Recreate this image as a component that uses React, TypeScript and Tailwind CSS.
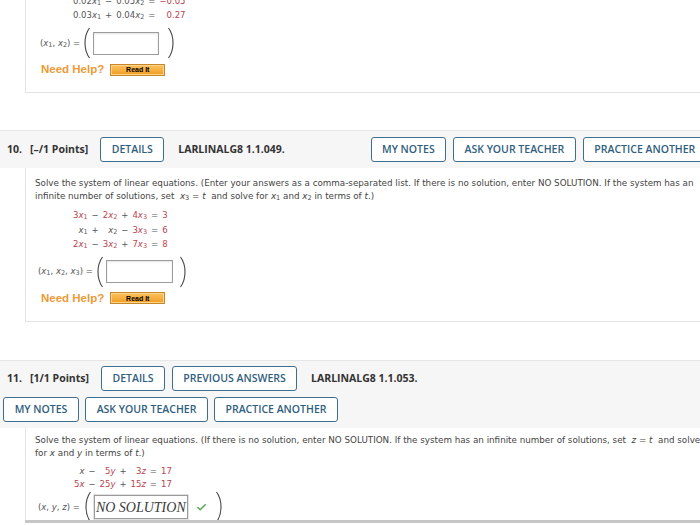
import React from 'react';
import { Check } from 'lucide-react';

const RED = 'text-[#b8434f]';
const GRAY = 'text-[#555]';

// variable with optional subscript, e.g. x₁
const V = ({ n, s }: { n: string; s?: string }) => (
  <span>
    <i>{n}</i>
    {s && <sub className="text-[6.5px] relative top-[1px]">{s}</sub>}
  </span>
);

const Paren = ({ close }: { close?: boolean }) => (
  <svg width="9" height="32" viewBox="0 0 9 32" className="shrink-0">
    <path
      d={close ? 'M1.5 1 C7.5 9 7.5 23 1.5 31' : 'M7.5 1 C1.5 9 1.5 23 7.5 31'}
      fill="none"
      stroke="#444"
      strokeWidth="1.1"
    />
  </svg>
);

const Btn = ({ label, w }: { label: string; w: string }) => (
  <div
    className={`${w} h-[25px] shrink-0 flex items-center justify-center rounded-[3px] border-[1.5px] border-[#3f6f8e] bg-white text-[10.5px] font-semibold text-[#2f5e7e]`}
  >
    {label}
  </div>
);

const NeedHelp = () => (
  <div className="flex items-center font-['Liberation_Sans',Arial,sans-serif]">
    <span className="text-[11.5px] font-bold text-[#ec9a37]">Need Help?</span>
    <div className="ml-[6px] w-[55px] h-[12px] flex items-center justify-center bg-linear-to-b from-[#fcc35e] to-[#f09c1c] border border-[#c7862a] shadow-[inset_0_0_0_1px_#fbd48a] text-[7px] font-bold text-black leading-none">
      Read It
    </div>
  </div>
);

type Cell = { t: React.ReactNode; c?: string };

const Equations = ({ rows, cols, rowH }: { rows: Cell[][]; cols: number; rowH: string }) => (
  <div
    className={`grid gap-x-[4px] justify-items-end ${rowH}`}
    style={{ gridTemplateColumns: `repeat(${cols}, auto)`, width: 'max-content' }}
  >
    {rows.flatMap((r, i) =>
      r.map((cell, j) => (
        <span key={`${i}-${j}`} className={cell.c ?? GRAY}>
          {cell.t}
        </span>
      ))
    )}
  </div>
);

const Box = ({ w }: { w: string }) => (
  <div className={`${w} h-[23px] mx-[2px] border border-[#9c9c9c] bg-white shadow-[inset_0_1px_2px_rgba(0,0,0,0.12)]`} />
);

export default function App() {
  const op = (s: string): Cell => ({ t: s, c: 'text-[#555]' });

  const q9: Cell[][] = [
    [{ t: <>0.02<V n="x" s="1" /></> }, op('−'), { t: <>0.05<V n="x" s="2" /></> }, op('='), { t: '−0.05', c: RED }],
    [{ t: <>0.03<V n="x" s="1" /></> }, op('+'), { t: <>0.04<V n="x" s="2" /></> }, op('='), { t: '0.27', c: RED }],
  ];

  const q10: Cell[][] = [
    [{ t: <>3<V n="x" s="1" /></>, c: RED }, op('−'), { t: <>2<V n="x" s="2" /></>, c: RED }, op('+'), { t: <>4<V n="x" s="3" /></>, c: RED }, op('='), { t: '3', c: RED }],
    [{ t: <V n="x" s="1" /> }, op('+'), { t: <V n="x" s="2" /> }, op('−'), { t: <>3<V n="x" s="3" /></>, c: RED }, op('='), { t: '6', c: RED }],
    [{ t: <>2<V n="x" s="1" /></>, c: RED }, op('−'), { t: <>3<V n="x" s="2" /></>, c: RED }, op('+'), { t: <>7<V n="x" s="3" /></>, c: RED }, op('='), { t: '8', c: RED }],
  ];

  const q11: Cell[][] = [
    [{ t: <V n="x" /> }, op('−'), { t: <>5<V n="y" /></>, c: RED }, op('+'), { t: <>3<V n="z" /></>, c: RED }, op('='), { t: '17', c: RED }],
    [{ t: <>5<V n="x" /></>, c: RED }, op('−'), { t: <>25<V n="y" /></>, c: RED }, op('+'), { t: <>15<V n="z" /></>, c: RED }, op('='), { t: '17', c: RED }],
  ];

  return (
    <div className="w-[700px] h-[525px] overflow-hidden bg-white font-['DejaVu_Sans',Verdana,sans-serif] text-[#333]">
      {/* tail of question 9 */}
      <div className="ml-[25px] h-[93px] border-l border-b border-[#e3e3e3] overflow-hidden text-[8.5px]">
        <div className="-mt-[6px] ml-[47px]">
          <Equations rows={q9} cols={5} rowH="leading-[14px]" />
        </div>
        <div className="flex items-center ml-[14px] mt-[5px]">
          <span className={GRAY}>
            (<V n="x" s="1" />, <V n="x" s="2" />) =
          </span>
          <div className="ml-[2px] flex items-center">
            <Paren />
            <Box w="w-[66px]" />
            <div className="w-[6px]" />
            <Paren close />
          </div>
        </div>
        <div className="ml-[15px] mt-[2px]">
          <NeedHelp />
        </div>
      </div>

      {/* question 10 */}
      <div className="mt-[37px] h-[38px] border-t border-[#e6e6e6] bg-[#f6f6f6] flex items-center whitespace-nowrap font-['Open_Sans',sans-serif] text-[#333]">
        <span className="ml-[7px] text-[10.5px] font-bold">10.</span>
        <span className="ml-[8px] text-[10.5px] font-bold">[–/1 Points]</span>
        <div className="ml-[12px]">
          <Btn label="DETAILS" w="w-[64px]" />
        </div>
        <span className="ml-[14px] text-[10.5px] font-bold">LARLINALG8 1.1.049.</span>
        <div className="ml-[86px] flex gap-[7px]">
          <Btn label="MY NOTES" w="w-[75px]" />
          <Btn label="ASK YOUR TEACHER" w="w-[123px]" />
          <Btn label="PRACTICE ANOTHER" w="w-[124px]" />
        </div>
      </div>
      <div className="ml-[25px] h-[154px] border-l border-b border-[#e3e3e3] overflow-hidden text-[8.75px] text-[#444] whitespace-nowrap">
        <p className="pt-[9px] pl-[9px] leading-[13px]">
          Solve the system of linear equations. (Enter your answers as a comma-separated list. If there is no solution, enter NO SOLUTION. If the system has an
          <br />
          infinite number of solutions, set&nbsp; <V n="x" s="3" /> = <i>t</i>&nbsp; and solve for <V n="x" s="1" /> and <V n="x" s="2" /> in terms of <i>t</i>.)
        </p>
        <div className="ml-[47px] mt-[5px] text-[8.5px]">
          <Equations rows={q10} cols={7} rowH="leading-[14.5px]" />
        </div>
        <div className="flex items-center ml-[12px] mt-[4px] text-[8.5px]">
          <span className={GRAY}>
            (<V n="x" s="1" />, <V n="x" s="2" />, <V n="x" s="3" />) =
          </span>
          <div className="ml-[2px] flex items-center">
            <Paren />
            <Box w="w-[67px]" />
            <div className="w-[4px]" />
            <Paren close />
          </div>
        </div>
        <div className="ml-[15px] mt-[2px]">
          <NeedHelp />
        </div>
      </div>

      {/* question 11 */}
      <div className="mt-[38px] h-[68px] border-t border-[#e6e6e6] bg-[#f6f6f6] pt-[5px] whitespace-nowrap font-['Open_Sans',sans-serif] text-[#333]">
        <div className="flex items-center h-[25px]">
          <span className="ml-[7px] text-[10.5px] font-bold">11.</span>
          <span className="ml-[8px] text-[10.5px] font-bold">[1/1 Points]</span>
          <div className="ml-[12px] flex gap-[7px]">
            <Btn label="DETAILS" w="w-[64px]" />
            <Btn label="PREVIOUS ANSWERS" w="w-[125px]" />
          </div>
          <span className="ml-[14px] text-[10.5px] font-bold">LARLINALG8 1.1.053.</span>
        </div>
        <div className="flex items-center h-[25px] mt-[6px] ml-[3px] gap-[6px]">
          <Btn label="MY NOTES" w="w-[76px]" />
          <Btn label="ASK YOUR TEACHER" w="w-[123px]" />
          <Btn label="PRACTICE ANOTHER" w="w-[124px]" />
        </div>
      </div>
      <div className="ml-[25px] h-[92px] border-l border-[#e3e3e3] overflow-hidden text-[8.75px] text-[#444] whitespace-nowrap">
        <p className="pt-[6px] pl-[9px] leading-[13px]">
          Solve the system of linear equations. (If there is no solution, enter NO SOLUTION. If the system has an infinite number of solutions, set&nbsp; <i>z</i> = <i>t</i>&nbsp; and solve
          <br />
          for <i>x</i> and <i>y</i> in terms of <i>t</i>.)
        </p>
        <div className="ml-[48px] mt-[5px] text-[8.5px]">
          <Equations rows={q11} cols={7} rowH="leading-[13px]" />
        </div>
        <div className="flex items-center ml-[12px] mt-0 text-[8.5px]">
          <span className={GRAY}>
            (<i>x</i>, <i>y</i>, <i>z</i>) =
          </span>
          <div className="ml-[3px] flex items-center">
            <Paren />
            <div className="w-[94px] h-[24px] ml-[2px] border border-[#9a9a9a] shadow-[0_0_0_1px_#e2e2e2] bg-white flex items-center justify-center font-['Liberation_Serif',serif] italic text-[14px] text-[#3a3a3a]">
              NO SOLUTION
            </div>
            <Check size={11} strokeWidth={3.5} className="ml-[8px] text-[#5cae5c]" />
            <div className="w-[8px]" />
            <Paren close />
          </div>
        </div>
      </div>
      <div className="ml-[25px] h-[3px] bg-[#c6c6c6]" />
    </div>
  );
}
